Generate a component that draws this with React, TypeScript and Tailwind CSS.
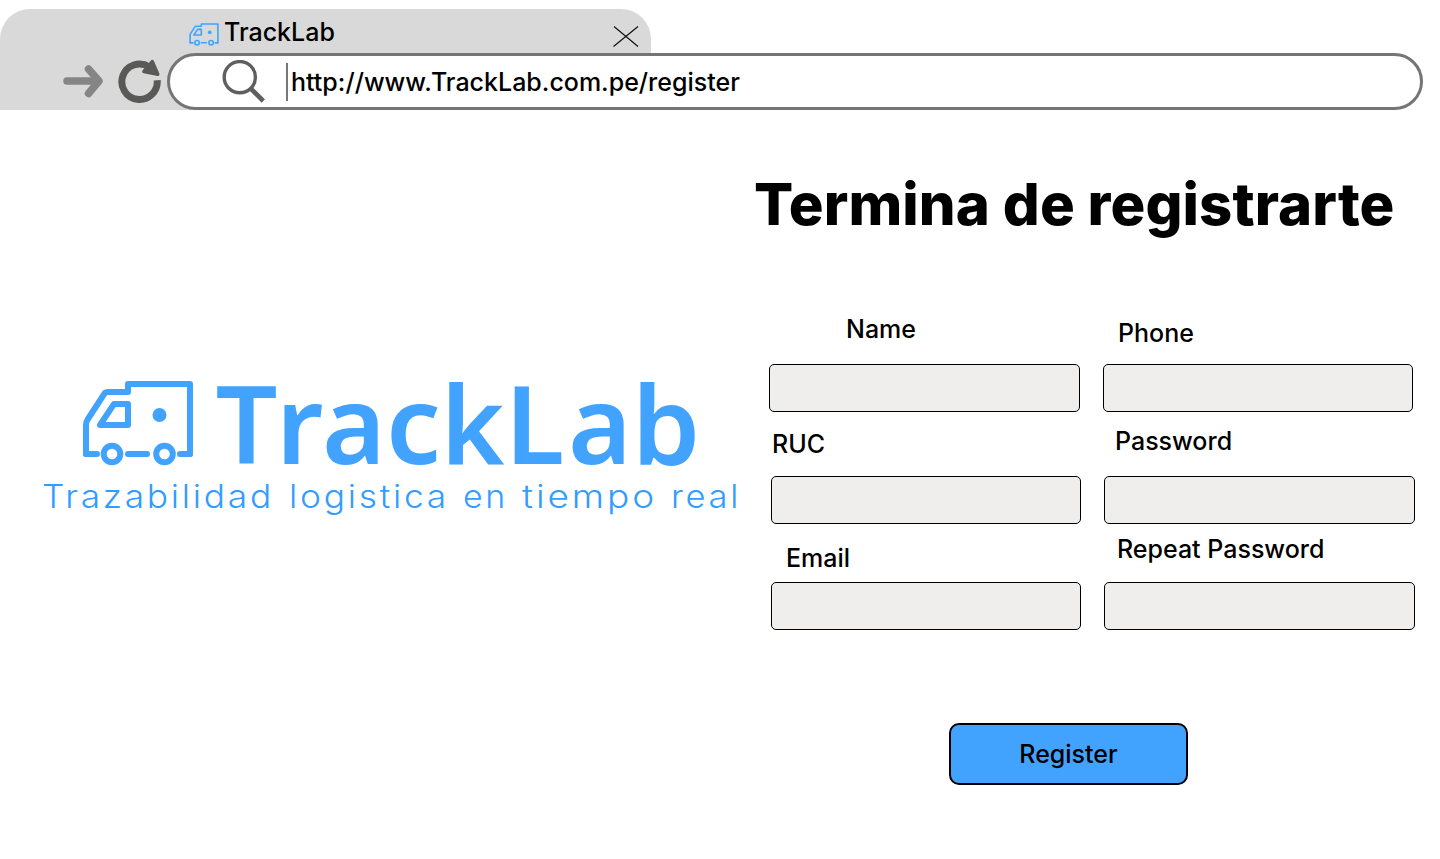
import type { ReactNode } from "react";

function Truck({ className }: { className: string }) {
  return (
    <svg
      className={className}
      viewBox="0 0 112 86"
      fill="none"
      stroke="#42a3ff"
      strokeWidth="6"
      strokeLinejoin="round"
    >
      <path d="M15 74H4V45c0-2 .5-4 1.600-5.500L22.500 13.500C23.300 12.300 24.500 12 26 12H46V4H108V74H98" />
      <path d="M15 74H4M98 74h10M46 74h19" strokeLinecap="round" />
      <path d="M46 24H32L18 45H46Z" />
      <circle cx="30" cy="74" r="8.300" />
      <circle cx="82.500" cy="74" r="8.300" />
      <circle cx="77.500" cy="35" r="7" fill="#42a3ff" stroke="none" />
    </svg>
  );
}

function Wordmark() {
  return (
    <svg className="block h-[160px] w-[710px] overflow-visible" viewBox="35 370 710 160" fill="#42a3ff">
      <text
        y="464"
        x="215.500 276 322 386 440.500 505 568 632"
        className="font-['Noto_Sans',sans-serif] text-[109px] font-semibold"
      >
        TrackLab
      </text>
      <g className="font-['Inter',sans-serif] text-[32px] font-light tracking-[2.500px]" fill="#339cff">
        <text x="42" y="508" textLength="232" lengthAdjust="spacingAndGlyphs">Trazabilidad</text>
        <text x="289" y="508" textLength="160" lengthAdjust="spacingAndGlyphs">logistica</text>
        <text x="463" y="508" textLength="45" lengthAdjust="spacingAndGlyphs">en</text>
        <text x="522" y="508" textLength="135" lengthAdjust="spacingAndGlyphs">tiempo</text>
        <text x="671" y="508" textLength="70" lengthAdjust="spacingAndGlyphs">real</text>
      </g>
    </svg>
  );
}

function Field({
  id,
  label,
  type = "text",
  labelClass,
  inputClass,
}: {
  id: string;
  label: string;
  type?: string;
  labelClass: string;
  inputClass: string;
}) {
  return (
    <div className="flex flex-col items-start justify-between">
      <label htmlFor={id} className={`text-[25px] leading-[30px] whitespace-nowrap ${labelClass}`}>
        {label}
      </label>
      <input
        id={id}
        type={type}
        className={`block h-12 rounded-[5px] border border-black bg-[#efeeec] px-3 text-xl ${inputClass}`}
      />
    </div>
  );
}

function Row({ className, children }: { className: string; children: ReactNode }) {
  return <div className={`grid grid-cols-[334px_312px] ${className}`}>{children}</div>;
}

function BrowserBar() {
  return (
    <header className="grid h-[110px] grid-cols-1 grid-rows-1 pt-[9px]">
      <div className="col-start-1 row-start-1 flex h-[101px] w-[651px] items-start rounded-t-[30px] bg-[#d9d9d9] pl-[189px]">
        <Truck className="mt-[14px] h-[23px] w-[30px]" />
        <span className="mt-[8px] ml-[5px] text-[25px] leading-[30px]">TrackLab</span>
        <svg className="mt-[16px] mr-[12px] ml-auto h-[23px] w-[27px]" viewBox="0 0 27 23" stroke="#111" strokeWidth="1.200">
          <path d="M2 1.500 26 21.500M26 1.500 1.500 21.500" />
        </svg>
      </div>
      <div className="col-start-1 row-start-1 flex items-end">
        <svg className="mr-[14px] mb-[11px] ml-[62px] h-[36px] w-[42px]" viewBox="0 0 42 36" fill="none" stroke="#858585" strokeWidth="7.500" strokeLinecap="round" strokeLinejoin="round">
          <path d="M5 18H36M26.500 6 37 18 26.500 30.500" />
        </svg>
        <svg className="mr-[5px] mb-[6px] h-[46px] w-[44px]" viewBox="0 0 44 46" fill="none">
          <path d="M31 8.800A17.700 17.700 0 1 0 39.200 22.300" stroke="#595957" strokeWidth="7" />
          <path d="M34.300 3.700 39.700 16.300 26 13.500Z" fill="#595957" stroke="#595957" strokeWidth="3.600" strokeLinejoin="round" />
        </svg>
        <div className="flex h-[57px] w-[1256px] items-center rounded-full border-[3px] border-[#757575] bg-white pl-[51px]">
          <svg className="mt-px h-[44px] w-[46px]" viewBox="0 0 46 44" fill="none" stroke="#5f5f5f">
            <circle cx="18.800" cy="17.200" r="15.600" strokeWidth="3.400" />
            <path d="M29 27.800 42.300 41" strokeWidth="4.600" />
          </svg>
          <div className="mt-px ml-[19px] flex h-[38px] items-center border-l-2 border-[#777] pl-[3px] text-[25px] leading-[30px]">
            http://www.TrackLab.com.pe/register
          </div>
        </div>
      </div>
    </header>
  );
}

export default function App() {
  return (
    <div className="h-[859px] w-[1440px] overflow-hidden bg-white font-['Inter',sans-serif] font-medium text-black">
      <BrowserBar />
      <main className="flex">
        <section className="w-[755px] shrink-0 pt-[260px] pl-[35px]">
          <div className="grid">
            <div className="col-start-1 row-start-1">
              <Wordmark />
            </div>
            <div className="col-start-1 row-start-1 pt-[8px] pl-[47px]">
              <Truck className="h-[90px] w-[112px]" />
            </div>
          </div>
        </section>
        <form className="flex w-[685px] flex-col pt-[59px]" onSubmit={(e) => e.preventDefault()}>
          <h1 className="-ml-px h-[145px] text-[58px] leading-[70px] font-extrabold tracking-[0.1px] whitespace-nowrap">
            Termina de registrarte
          </h1>
          <Row className="ml-[14px] h-[98px]">
            <Field id="name" label="Name" labelClass="ml-[77px]" inputClass="w-[311px]" />
            <Field id="phone" label="Phone" labelClass="mt-[4px] ml-[15px]" inputClass="w-[310px]" />
          </Row>
          <Row className="mt-[14px] ml-[16px] h-[98px]">
            <Field id="ruc" label="RUC" labelClass="mt-[3px] ml-px" inputClass="w-[310px]" />
            <Field id="password" label="Password" type="password" labelClass="ml-[10px]" inputClass="-ml-px w-[311px]" />
          </Row>
          <Row className="mt-[10px] ml-[16px] h-[96px]">
            <Field id="email" label="Email" labelClass="mt-[9px] ml-[15px]" inputClass="w-[310px]" />
            <Field id="repeat" label="Repeat Password" type="password" labelClass="ml-[12px]" inputClass="-ml-px w-[311px]" />
          </Row>
          <button
            type="submit"
            className="mt-[93px] ml-[194px] h-[62px] w-[239px] rounded-[10px] border-2 border-black bg-[#42a3ff] text-[25px] leading-[30px]"
          >
            Register
          </button>
        </form>
      </main>
    </div>
  );
}
